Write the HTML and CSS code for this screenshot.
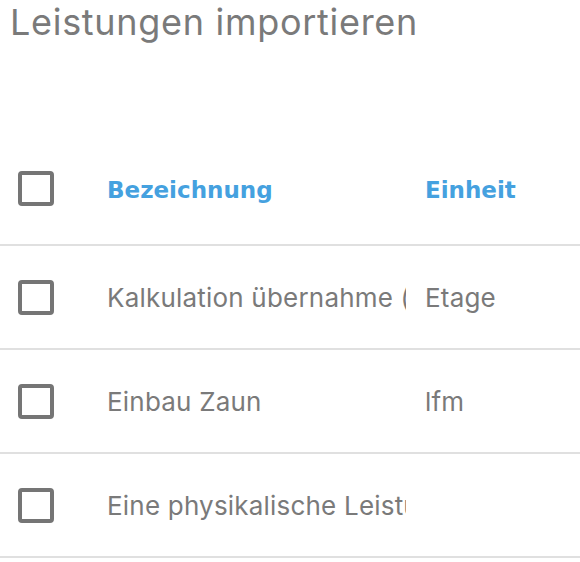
FILE: index.html
```html
<!DOCTYPE html>
<html lang="de">
<head>
<meta charset="utf-8">
<link rel="stylesheet" href="styles.css">
</head>
<body>
<div class="page">
  <h1 class="title">Leistungen importieren</h1>
  <div class="table">
    <div class="row head">
      <div class="cell check"><span class="box"></span></div>
      <div class="cell name">Bezeichnung</div>
      <div class="cell unit">Einheit</div>
    </div>
    <div class="row">
      <div class="cell check"><span class="box"></span></div>
      <div class="cell name">Kalkulation übernahme (Etage)</div>
      <div class="cell unit">Etage</div>
    </div>
    <div class="row">
      <div class="cell check"><span class="box"></span></div>
      <div class="cell name">Einbau Zaun</div>
      <div class="cell unit">lfm</div>
    </div>
    <div class="row">
      <div class="cell check"><span class="box"></span></div>
      <div class="cell name">Eine physikalische Leistung</div>
      <div class="cell unit"></div>
    </div>
  </div>
</div>
</body>
</html>
```
FILE: styles.css
```css
html, body {
  margin: 0;
  padding: 0;
  background: #fff;
}
body {
  font-family: "Inter", "Roboto", "Liberation Sans", sans-serif;
  color: #7a7a7a;
  width: 580px;
  height: 562px;
  overflow: hidden;
}
.title {
  margin: 0;
  padding: 0 0 0 10px;
  font-size: 36px;
  font-weight: 400;
  line-height: 44px;
  color: #7a7a7a;
  letter-spacing: 0.7px;
}
.table {
  margin-top: 88px;
}
.row {
  display: flex;
  align-items: center;
  height: 102px;
  border-bottom: 2px solid #e0e0e0;
}
.row.head {
  height: 112px;
}
.cell.check {
  width: 107px;
  padding-left: 18px;
  box-sizing: border-box;
  display: flex;
}
.box {
  width: 36px;
  height: 35px;
  box-sizing: border-box;
  border: 4px solid #757575;
  border-radius: 4px;
}
.cell.name {
  width: 299px;
  white-space: nowrap;
  overflow: hidden;
  font-size: 26px;
  letter-spacing: 0.2px;
}
.cell.unit {
  padding-left: 19px;
  font-size: 26px;
  letter-spacing: 0.2px;
}
.head .cell.name, .head .cell.unit {
  font-family: "DejaVu Sans", "Inter", sans-serif;
  font-size: 23px;
  font-weight: 700;
  letter-spacing: 0;
  color: #45a1df;
  padding-top: 3px;
}
```
